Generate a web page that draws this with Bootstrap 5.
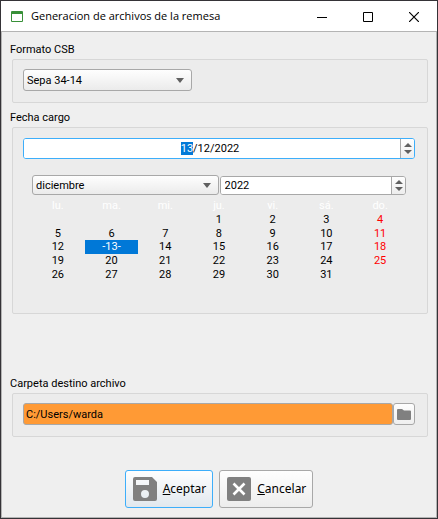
<!DOCTYPE html>
<html lang="es">
<head>
<meta charset="utf-8">
<meta name="viewport" content="width=device-width, initial-scale=1">
<title>Generacion de archivos de la remesa</title>
<link href="https://cdn.jsdelivr.net/npm/bootstrap@5.3.0/dist/css/bootstrap.min.css" rel="stylesheet">
<style>
  body { font-family: Roboto, "Noto Sans", sans-serif; font-size: 11px; line-height: 14px; color: #000; background: #efefef; }
  .win { border: 1px solid #353337; }
  .titlebar { height: 30px; font-family: "Open Sans", "Noto Sans", sans-serif; padding-left: 10px; background: #fff; }
  .titlebar h1 { font-size: 11px; line-height: 16px; margin: 0 0 0 8px; font-weight: 400; color: #000; }
  .capbtn { width: 46px; height: 28px; padding: 0; border: 0; background: none; }
  .client { border: 1px solid #b4b4b4; padding: 11px 8px 9px; }
  .client legend { font-size: 11px; line-height: 14px; margin-bottom: 2px; }
  .panel { margin: 0 0 0 2px; padding: 9px 12px 11px 10px; border: 1px solid #d7d7d7; border-radius: 2px; background: #ececec; }
  .panel-date { padding-top: 10px; }
  .ctl { font-size: 11px; line-height: 14px; color: #000; border: 1px solid #a8a8a8; border-radius: 3px; min-height: 0; }
  .drop { height: 22px; padding: 2px 24px 0 3px;
    background: url("data:image/svg+xml,%3Csvg xmlns='http://www.w3.org/2000/svg' width='8' height='5'%3E%3Cpath d='M0 0h8L4 5z' fill='%23606060'/%3E%3C/svg%3E") no-repeat right 7px center / 8px 5px, linear-gradient(#fefefe, #ebebeb); }
  .drop-format { width: 169px; }
  .spin { background: #fff; overflow: hidden; }
  .spin input { font-size: 11px; line-height: 14px; color: #000; border: 0; padding: 0 4px; min-height: 0; height: 100%; border-radius: 0; }
  .spin input:focus { color: #000; }
  .ctl:focus, .spin input:focus { box-shadow: none; }
  .spin input::selection { background: rgba(0, 120, 215, .99); color: #fff; }
  .steps { width: 14px; border-left: 1px solid #a8a8a8; background: linear-gradient(#fefefe, #ededed); }
  .steps button { border: 0; padding: 0; background: none; height: 7px; line-height: 0; }
  .spin-date { height: 21px; border-color: #3daefa; }
  .spin-date input { padding-left: 0; }
  .spin-year { height: 19px; }
  .picker { margin: 16px 9px 0 9px; gap: 1px; }
  .picker .drop { height: 20px; padding-top: 1px; }
  .days { table-layout: fixed; height: 82px; margin: 4px 8px 21px 8px; width: calc(100% - 16px); }
  .days th, .days td { padding: 0; line-height: 13px; text-align: center; font-weight: 400; }
  .days th { color: #fff; line-height: 14px; }
  .days .sun { color: #f00; }
  .days .today { background: #0078d7; color: #fff; }
  .folder-in { height: 22px; padding: 1px 2px 0; background: #ff9a35; }
  .folder-in:focus { background: #ff9a35; }
  .folder-btn { width: 22px; height: 22px; padding: 0; line-height: 0; background: linear-gradient(#fefefe, #efefef); }
  .gap-y { margin-top: 8px; }
  .actions { margin-top: 33px; gap: 6px; }
  .act { height: 38px; padding: 0 6px 0 7px; gap: 6px; font-family: "Noto Sans", sans-serif; font-size: 12px; line-height: 16px; color: #000; border: 1px solid #a8a8a8; border-radius: 3px; background: linear-gradient(#fefefe, #ededed); }
  .act-main { border-color: #3daefa; background: linear-gradient(#fefefe, #e1e8ee); }
</style>
</head>
<body>
<main class="win min-vh-100 d-flex flex-column">
  <header class="titlebar d-flex align-items-center">
    <svg width="12" height="11" viewBox="0 0 12 11" aria-hidden="true"><path d="M0 1Q0 0 1 0H11Q12 0 12 1V10Q12 11 11 11H1Q0 11 0 10ZM1 3V10H11V3Z" fill="#389038" fill-rule="evenodd"/></svg>
    <h1 class="flex-grow-1 text-nowrap">Generacion de archivos de la remesa</h1>
    <button class="capbtn" type="button" aria-label="Minimizar"><svg width="10" height="10"><path d="M0 5.500H10" stroke="#000"/></svg></button>
    <button class="capbtn" type="button" aria-label="Maximizar"><svg width="10" height="10"><path d="M.5.5h9v9h-9z" fill="none" stroke="#000"/></svg></button>
    <button class="capbtn" type="button" aria-label="Cerrar"><svg width="10" height="10"><path d="M0 0L10 10M10 0L0 10" stroke="#000" stroke-width="1.200"/></svg></button>
  </header>
  <form class="client flex-grow-1 d-flex flex-column">
    <fieldset>
      <legend>Formato CSB</legend>
      <div class="panel">
        <select class="form-select ctl drop drop-format" aria-label="Formato CSB"><option>Sepa 34-14</option></select>
      </div>
    </fieldset>
    <fieldset class="gap-y">
      <legend>Fecha cargo</legend>
      <div class="panel panel-date">
        <div class="ctl spin spin-date d-flex">
          <input id="fecha" class="form-control text-center" type="text" value="13/12/2022" aria-label="Fecha cargo">
          <div class="steps d-flex flex-column flex-shrink-0 justify-content-center">
            <button type="button" aria-label="Subir fecha"><svg width="8" height="4"><path d="M0 4L4 0L8 4Z" fill="#606060"/></svg></button>
            <button type="button" aria-label="Bajar fecha"><svg width="8" height="4"><path d="M0 0H8L4 4Z" fill="#606060"/></svg></button>
          </div>
        </div>
        <div class="picker d-flex align-items-center">
          <select class="form-select ctl drop flex-fill w-50" aria-label="Mes"><option>diciembre</option></select>
          <div class="ctl spin spin-year d-flex flex-fill w-50">
            <input class="form-control" type="text" value="2022" aria-label="Año">
            <div class="steps d-flex flex-column flex-shrink-0 justify-content-center">
              <button type="button" aria-label="Subir año"><svg width="8" height="4"><path d="M0 4L4 0L8 4Z" fill="#606060"/></svg></button>
              <button type="button" aria-label="Bajar año"><svg width="8" height="4"><path d="M0 0H8L4 4Z" fill="#606060"/></svg></button>
            </div>
          </div>
        </div>
        <table class="days">
          <thead><tr><th>lu.</th><th>ma.</th><th>mi.</th><th>ju.</th><th>vi.</th><th>sá.</th><th>do.</th></tr></thead>
          <tbody>
            <tr><td></td><td></td><td></td><td>1</td><td>2</td><td>3</td><td class="sun">4</td></tr>
            <tr><td>5</td><td>6</td><td>7</td><td>8</td><td>9</td><td>10</td><td class="sun">11</td></tr>
            <tr><td>12</td><td class="today">-13-</td><td>14</td><td>15</td><td>16</td><td>17</td><td class="sun">18</td></tr>
            <tr><td>19</td><td>20</td><td>21</td><td>22</td><td>23</td><td>24</td><td class="sun">25</td></tr>
            <tr><td>26</td><td>27</td><td>28</td><td>29</td><td>30</td><td>31</td><td></td></tr>
          </tbody>
        </table>
      </div>
    </fieldset>
    <fieldset class="mt-auto">
      <legend>Carpeta destino archivo</legend>
      <div class="panel d-flex">
        <input class="form-control ctl folder-in" type="text" value="C:/Users/warda" aria-label="Carpeta destino archivo">
        <button class="ctl folder-btn flex-shrink-0" type="button" aria-label="Elegir carpeta"><svg width="14" height="11" viewBox="0 0 14 11"><path d="M1 0H5L7 1.500H13Q14 1.500 14 2.500V10Q14 11 13 11H1Q0 11 0 10V1Q0 0 1 0Z" fill="#808080"/></svg></button>
      </div>
    </fieldset>
    <div class="actions d-flex justify-content-center">
      <button class="act act-main d-flex align-items-center" type="submit">
        <svg width="24" height="24" viewBox="0 0 24 24" aria-hidden="true"><path d="M2 0H19L24 5V22Q24 24 22 24H2Q0 24 0 22V2Q0 0 2 0ZM3 3V8H16V3ZM12 13A4 4 0 1 0 12 21A4 4 0 1 0 12 13Z" fill="#808080" fill-rule="evenodd"/></svg>
        <span><u>A</u>ceptar</span>
      </button>
      <button class="act d-flex align-items-center" type="button">
        <svg width="24" height="24" viewBox="0 0 24 24" aria-hidden="true"><rect width="24" height="24" rx="2" fill="#808080"/><path d="M6.500 6.500L17.500 17.500M17.500 6.500L6.500 17.500" stroke="#fff" stroke-width="2.600"/></svg>
        <span><u>C</u>ancelar</span>
      </button>
    </div>
  </form>
</main>
<script src="https://cdn.jsdelivr.net/npm/bootstrap@5.3.0/dist/js/bootstrap.bundle.min.js"></script>
<script>
  const fecha = document.getElementById('fecha');
  fecha.focus();
  fecha.setSelectionRange(0, 2);
</script>
</body>
</html>
